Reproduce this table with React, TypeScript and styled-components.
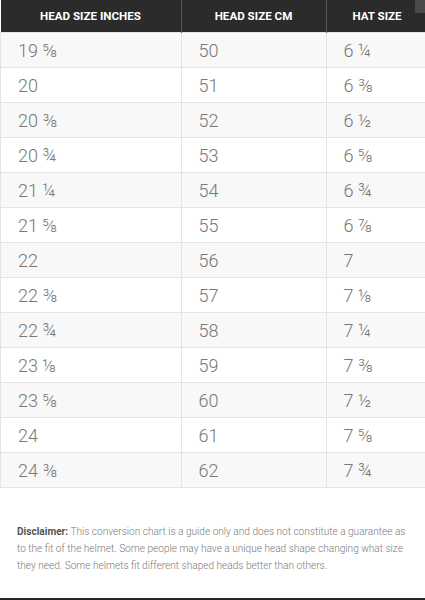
import React from 'react';
import styled, { createGlobalStyle } from 'styled-components';

const GlobalStyle = createGlobalStyle`
  html, body { margin: 0; padding: 0; background: #fff; }
  body { font-family: Roboto, "Liberation Sans", Arial, sans-serif; }
`;

const Page = styled.div`
  width: 425px;
  height: 600px;
  display: flex;
  flex-direction: column;
  position: relative;
  overflow: hidden;
  border-bottom: 2px solid #262626;
  box-sizing: border-box;
`;

const Corner = styled.div`
  position: absolute;
  top: 0;
  right: 0;
  width: 10px;
  height: 13px;
  background: #4a4a4a;
`;

const Table = styled.table`
  width: 425px;
  border-collapse: collapse;
  table-layout: fixed;
`;

const HeadCell = styled.th<{ $w: number }>`
  width: ${p => p.$w}px;
  height: 32px;
  padding: 0;
  background: #2b2b2b;
  color: #fff;
  font-size: 11.6px;
  font-weight: 700;
  text-align: center;
  border-left: 1px solid #555;
  &:first-child { border-left: none; }
`;

const Row = styled.tr<{ $shade: boolean }>`
  height: 35px;
  background: ${p => (p.$shade ? '#f8f8f8' : '#fff')};
`;

const Cell = styled.td`
  padding: 0 0 0 17px;
  color: #777;
  font-size: 18px;
  font-weight: 300;
  border: 1px solid #e4e4e4;
  border-right: none;
`;

const Disclaimer = styled.p`
  margin: 0;
  padding: 35px 17px 0;
  font-size: 10.1px;
  line-height: 17px;
  color: #7a7a7a;
  font-weight: 300;

  strong { color: #555; font-weight: 700; }
`;

const rows: [string, string, string][] = [
  ['19 ⅝', '50', '6 ¼'],
  ['20', '51', '6 ⅜'],
  ['20 ⅜', '52', '6 ½'],
  ['20 ¾', '53', '6 ⅝'],
  ['21 ¼', '54', '6 ¾'],
  ['21 ⅝', '55', '6 ⅞'],
  ['22', '56', '7'],
  ['22 ⅜', '57', '7 ⅛'],
  ['22 ¾', '58', '7 ¼'],
  ['23 ⅛', '59', '7 ⅜'],
  ['23 ⅝', '60', '7 ½'],
  ['24', '61', '7 ⅝'],
  ['24 ⅜', '62', '7 ¾'],
];

export default function App() {
  return (
    <Page>
      <GlobalStyle />
      <Table>
        <thead>
          <tr>
            <HeadCell $w={180}>HEAD SIZE INCHES</HeadCell>
            <HeadCell $w={144}>HEAD SIZE CM</HeadCell>
            <HeadCell $w={101}>HAT SIZE</HeadCell>
          </tr>
        </thead>
        <tbody>
          {rows.map((r, i) => (
            <Row key={i} $shade={i % 2 === 0}>
              <Cell>{r[0]}</Cell>
              <Cell>{r[1]}</Cell>
              <Cell>{r[2]}</Cell>
            </Row>
          ))}
        </tbody>
      </Table>
      <Disclaimer>
        <strong>Disclaimer:</strong> This conversion chart is a guide only and does not constitute a guarantee as
        to the fit of the helmet. Some people may have a unique head shape changing what size they need. Some
        helmets fit different shaped heads better than others.
      </Disclaimer>
      <Corner />
    </Page>
  );
}
